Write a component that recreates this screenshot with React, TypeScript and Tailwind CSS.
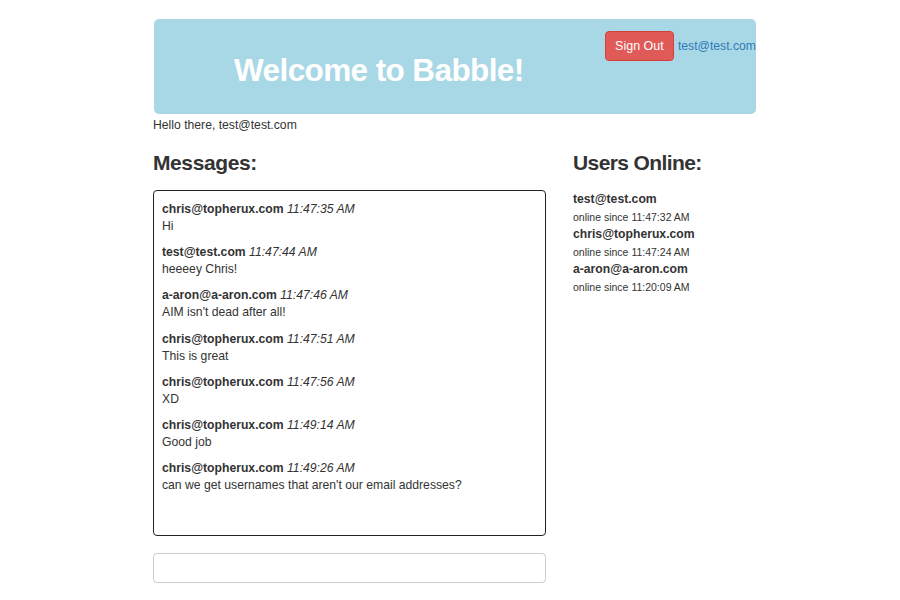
const messages = [
  { user: "chris@topherux.com", time: "11:47:35 AM", text: "Hi" },
  { user: "test@test.com", time: "11:47:44 AM", text: "heeeey Chris!" },
  { user: "a-aron@a-aron.com", time: "11:47:46 AM", text: "AIM isn't dead after all!" },
  { user: "chris@topherux.com", time: "11:47:51 AM", text: "This is great" },
  { user: "chris@topherux.com", time: "11:47:56 AM", text: "XD" },
  { user: "chris@topherux.com", time: "11:49:14 AM", text: "Good job" },
  { user: "chris@topherux.com", time: "11:49:26 AM", text: "can we get usernames that aren't our email addresses?" },
];

const users = [
  { user: "test@test.com", since: "11:47:32 AM" },
  { user: "chris@topherux.com", since: "11:47:24 AM" },
  { user: "a-aron@a-aron.com", since: "11:20:09 AM" },
];

export default function App() {
  return (
    <div className="min-h-[600px] bg-white pt-[19px] font-['Liberation_Sans',Arial,sans-serif] text-[12.2px] text-[#333]">
      <div className="ml-[153px] w-[603px]">
        <div className="ml-px flex h-[95px] rounded-[5px] bg-[#a8d8e6]">
          <h1 className="mt-[31px] ml-[80px] text-[31.5px] font-bold leading-[40px] tracking-[-0.6px] text-white">Welcome to Babble!</h1>
          <div className="ml-auto mt-[12px] flex items-start">
            <button type="button" className="h-[30px] w-[69px] rounded-[4px] border border-[#d43f3a] bg-[#e05a57] text-[12.5px] text-white">Sign Out</button>
            <a href="#" className="ml-[4px] mt-[6px] text-[#337ab7]">test@test.com</a>
          </div>
        </div>
        <p className="mt-[3px] leading-[17px]">Hello there, test@test.com</p>

        <div className="mt-[16px] flex gap-[27px]">
          <div className="w-[393px]">
            <h3 className="text-[21px] font-bold leading-[26px] tracking-[-0.4px]">Messages:</h3>
            <div className="mt-[14px] h-[346px] rounded-[4px] border border-[#222] px-[8px] pt-[10px]">
              {messages.map((m, i) => (
                <div key={i} className="mb-[9.2px] leading-[17px]">
                  <div><span className="font-bold">{m.user}</span> <em>{m.time}</em></div>
                  <div>{m.text}</div>
                </div>
              ))}
            </div>
            <input className="mt-[17px] h-[30px] w-full rounded-[4px] border border-[#ccc] px-2 outline-none" />
          </div>

          <div className="flex-1">
            <h3 className="text-[21px] font-bold leading-[26px] tracking-[-0.6px]">Users Online:</h3>
            <div className="mt-[15px]">
              {users.map((u) => (
                <div key={u.user}>
                  <div className="font-bold leading-[17px]">{u.user}</div>
                  <div className="mt-[1px] text-[10.5px] leading-[17px]">online since {u.since}</div>
                </div>
              ))}
            </div>
          </div>
        </div>
      </div>
    </div>
  );
}
